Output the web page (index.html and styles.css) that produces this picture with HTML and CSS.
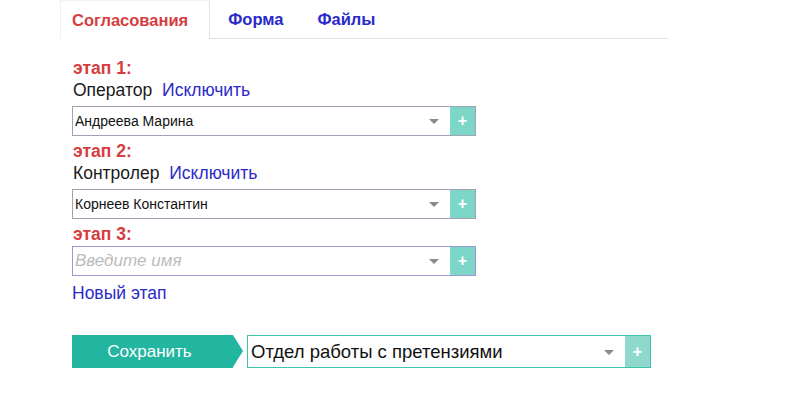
FILE: index.html
```html
<!DOCTYPE html>
<html lang="ru">
<head>
  <meta charset="UTF-8" />
  <title>Согласования</title>
  <link rel="stylesheet" href="styles.css">
</head>
<body>

  <!-- Вкладки -->
  <div class="tabs">
    <a class="tab active">Согласования</a>
    <a class="tab">Форма</a>
    <a class="tab">Файлы</a>
  </div>

  <div class="form">
    <div class="stage">этап 1:</div>
    <div class="role">Оператор <a class="link">Исключить</a></div>
    <div class="select">
      <span class="value">Андреева Марина</span>
      <span class="arrow"></span>
      <span class="plus">+</span>
    </div>

    <div class="stage">этап 2:</div>
    <div class="role">Контролер <a class="link">Исключить</a></div>
    <div class="select">
      <span class="value">Корнеев Константин</span>
      <span class="arrow"></span>
      <span class="plus">+</span>
    </div>

    <div class="stage">этап 3:</div>
    <div class="select focus">
      <span class="value placeholder">Введите имя</span>
      <span class="arrow"></span>
      <span class="plus">+</span>
    </div>

    <a class="link newStage">Новый этап</a>

    <div class="saveRow">
      <button class="saveBtn">Сохранить</button>
      <div class="select dept">
        <span class="value">Отдел работы с претензиями</span>
        <span class="arrow"></span>
        <span class="plus">+</span>
      </div>
    </div>
  </div>

</body>
</html>
```

FILE: styles.css
```css
body {
  margin: 0;
  background: #fff;
  font-family: "Liberation Sans", Arial, sans-serif;
  color: #222;
}

.tabs {
  display: flex;
  margin-left: 60px;
  width: 608px;
  height: 38px;
  border-bottom: 1px solid #e2e2e2;
}

.tab {
  display: flex;
  align-items: center;
  padding: 0 17px 0 17px;
  font-size: 16.5px;
  font-weight: bold;
  color: #2a2ac8;
  cursor: pointer;
}

.tab.active {
  color: #d63d3f;
  padding: 0 21px 0 11px;
  margin-right: 1px;
  border-left: 1px solid #f0f0f0;
  border-right: 1px solid #e2e2e2;
  border-top: 1px solid #f2f2f2;
  margin-bottom: -1px;
  background: #fff;
}

.form {
  padding: 19px 0 0 72px;
}

.stage {
  color: #d63d3f;
  font-weight: bold;
  font-size: 17.5px;
  height: 20px;
  line-height: 20px;
  margin: 0 0 2px 1px;
}

.role {
  font-size: 17.5px;
  height: 20px;
  line-height: 20px;
  margin: 0 0 6px 1px;
  color: #1a1a1a;
}

.link {
  color: #2a2ac8;
  margin-left: 5px;
  cursor: pointer;
}

.select {
  display: flex;
  align-items: stretch;
  width: 404px;
  height: 30px;
  box-sizing: border-box;
  border: 1px solid #9ea4b4;
  background: #fff;
  margin-bottom: 5px;
}

.select + .stage + .select {
  margin-bottom: 7px;
}

.select.focus {
  border-color: #9a9ad6;
}

.value {
  flex: 1;
  display: flex;
  align-items: center;
  padding-left: 2px;
  font-size: 14px;
  color: #111;
}

.placeholder {
  color: #bcbcbc;
  font-style: italic;
  font-size: 17px;
}

.arrow {
  align-self: center;
  width: 0;
  height: 0;
  border-left: 5px solid transparent;
  border-right: 5px solid transparent;
  border-top: 5px solid #8a8a8a;
  margin: 1px 11px 0 0;
}

.plus {
  width: 25px;
  background: #7dd7c8;
  color: #fff;
  font-weight: bold;
  font-size: 16px;
  display: flex;
  align-items: center;
  justify-content: center;
}

.newStage {
  display: block;
  margin: 0;
  font-size: 17.5px;
  height: 20px;
  line-height: 20px;
}

.saveRow {
  display: flex;
  align-items: center;
  margin-top: 32px;
}

.saveBtn {
  position: relative;
  width: 161px;
  height: 33px;
  border: none;
  background: #22b5a0;
  color: #fff;
  font-family: "Liberation Sans", Arial, sans-serif;
  font-size: 17px;
  padding: 0 6px 0 0;
  margin-right: 14px;
  cursor: pointer;
}

.saveBtn::after {
  content: "";
  position: absolute;
  top: 0;
  left: 161px;
  border-top: 16.5px solid transparent;
  border-bottom: 16.5px solid transparent;
  border-left: 10px solid #22b5a0;
}

.select.dept {
  height: 33px;
  border-color: #3fc2aa;
  margin-bottom: 0;
}

.dept .value {
  font-size: 18.5px;
  padding-left: 3px;
}

.dept .plus {
  background: #8fd9cc;
}
```
